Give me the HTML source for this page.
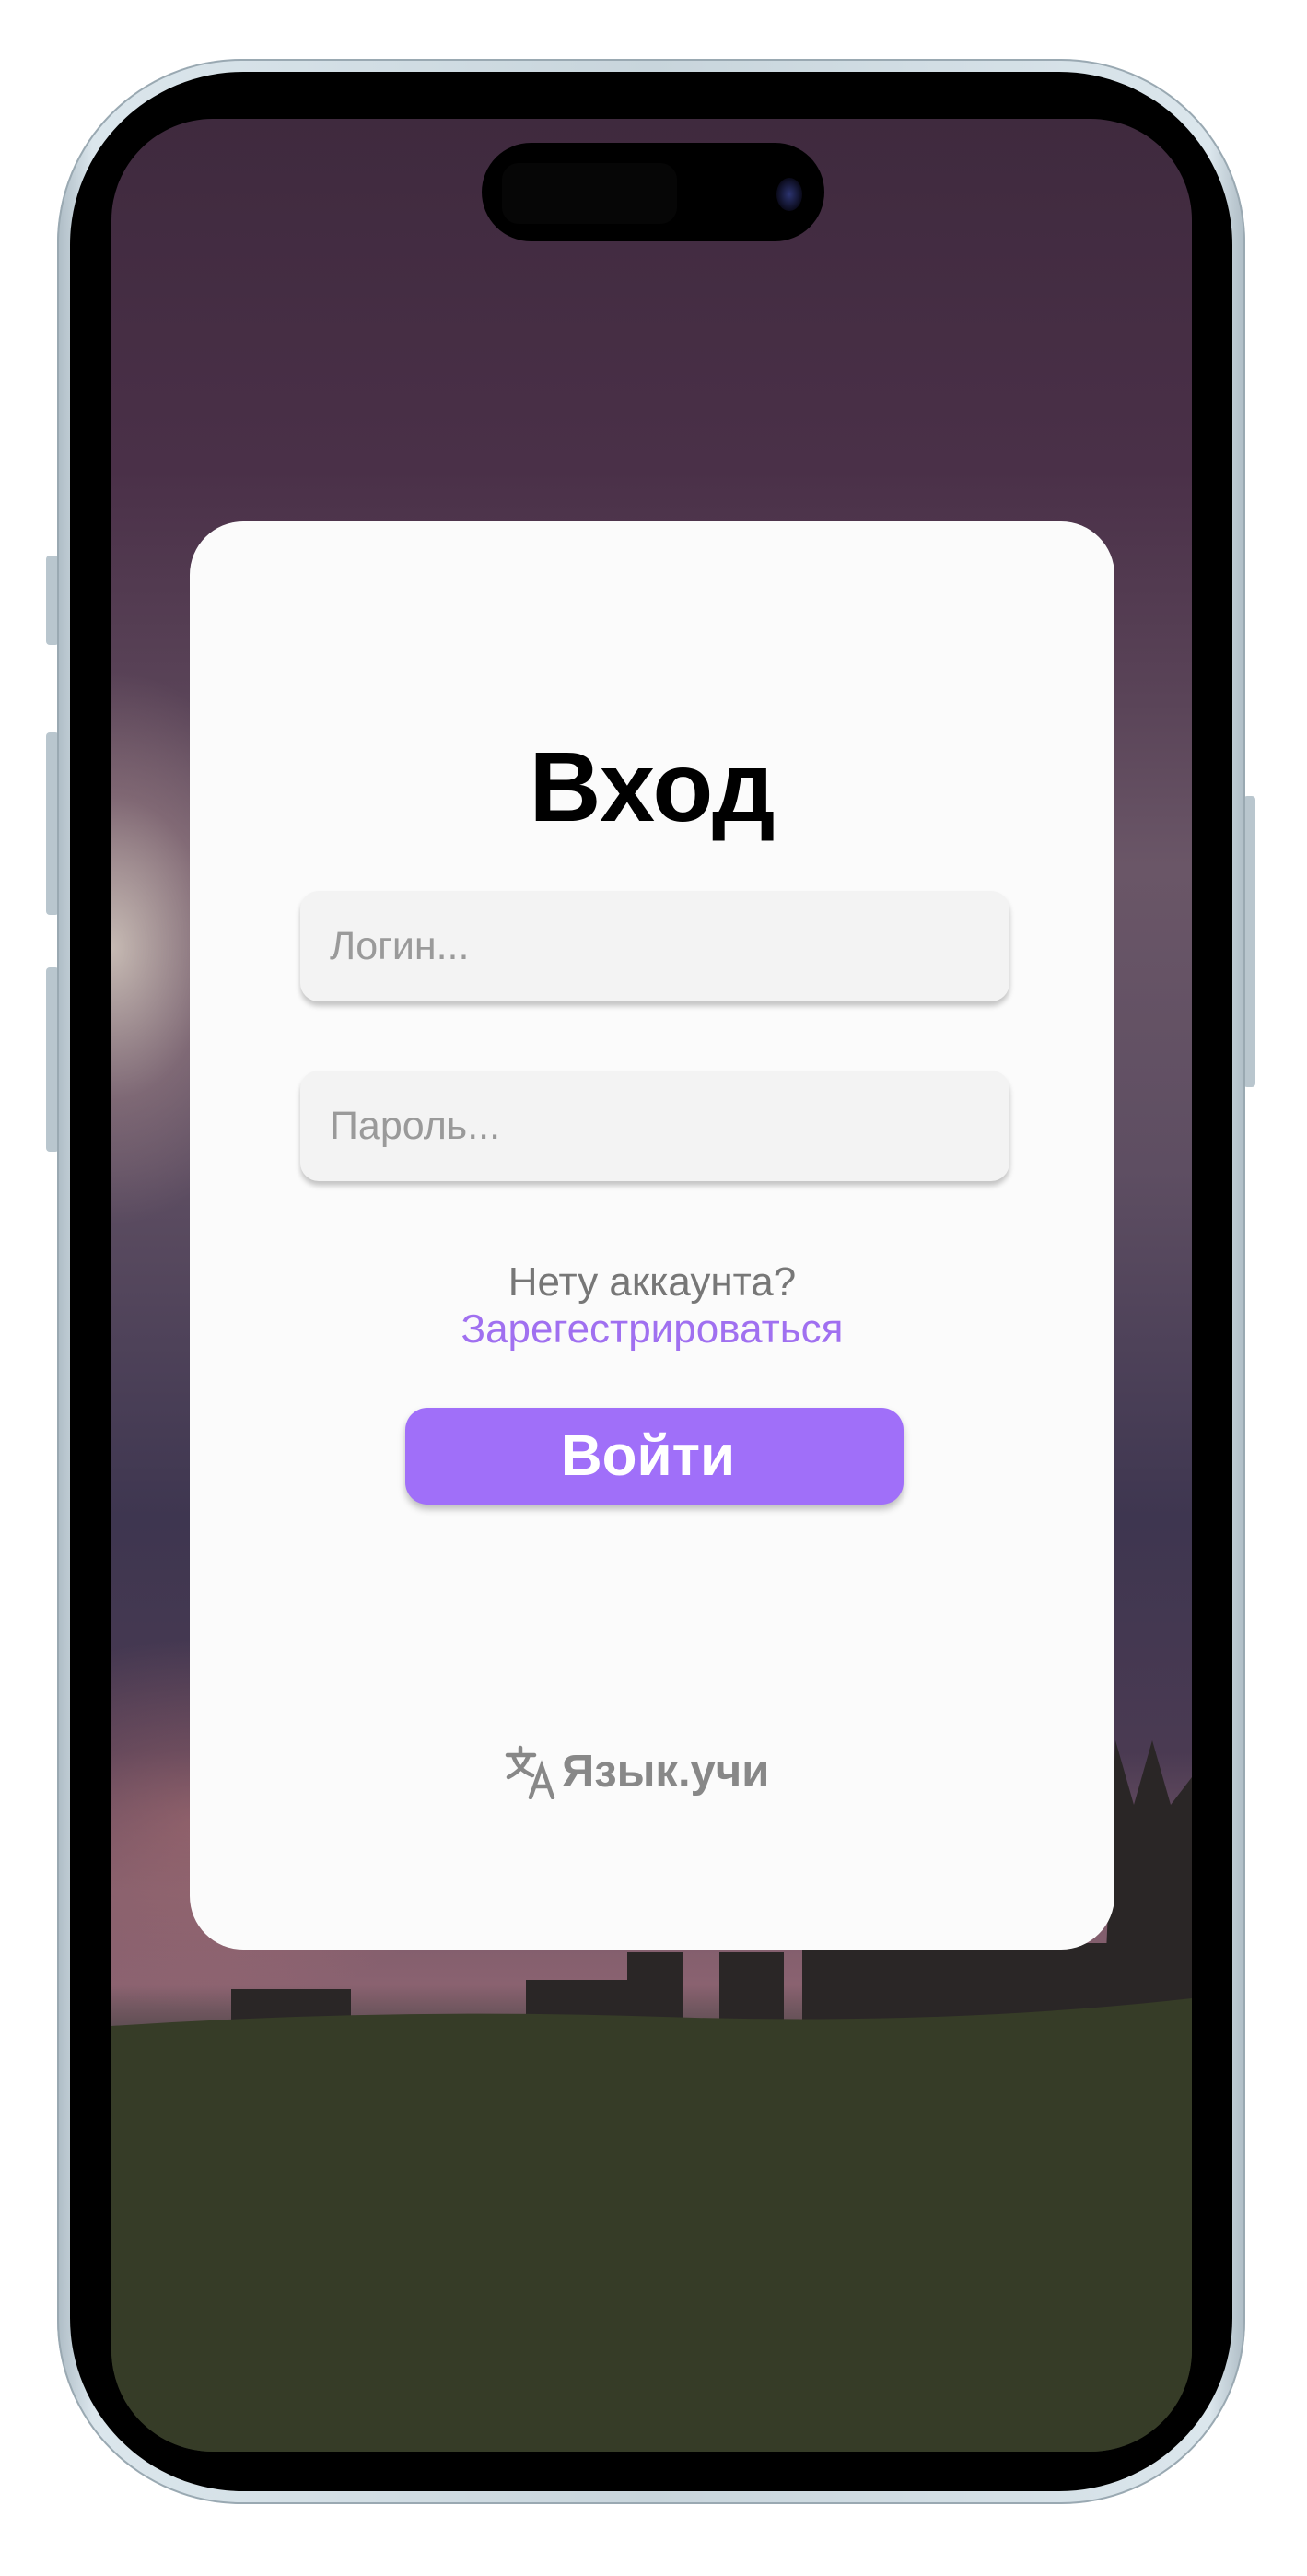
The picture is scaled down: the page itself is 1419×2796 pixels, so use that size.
<!DOCTYPE html>
<html><head><meta charset="utf-8"><style>
html,body{margin:0;padding:0;background:#fff;width:1419px;height:2796px;overflow:hidden;font-family:"Liberation Sans",Arial,sans-serif}
.abs{position:absolute}
.frame{left:62px;top:64px;width:1290px;height:2654px;border-radius:200px;background:linear-gradient(90deg,#aebcc5,#dbe6ec 3%,#c8d5dc 50%,#dbe6ec 97%,#aebcc5);box-shadow:inset 0 0 0 2px #9aa9b2}
.bezel{left:76px;top:78px;width:1262px;height:2626px;border-radius:188px;background:#000}
.screen{left:121px;top:129px;width:1173px;height:2532px;border-radius:110px;overflow:hidden;
background:
radial-gradient(ellipse 200px 300px at 0px 900px,rgba(230,220,205,.75),rgba(180,150,150,.35) 55%,rgba(0,0,0,0) 100%),
radial-gradient(ellipse 300px 200px at 100px 1850px,rgba(190,120,120,.5),rgba(0,0,0,0)),
linear-gradient(180deg,#3f2a3e 0%,#4a3048 15%,#5a4458 25%,#6a5667 32%,#5e4e62 45%,#3e3650 60%,#4a3a52 70%,#7a5a6a 76%,#8a6270 80%,#5a4c50 82%,#3a3a2a 84%,#2e3322 92%,#283020 100%)}
.island{left:523px;top:155px;width:372px;height:107px;border-radius:54px;background:#000}
.card{left:206px;top:566px;width:1004px;height:1550px;border-radius:58px;background:#fbfbfb}
.title{left:206px;width:1004px;top:800px;text-align:center;font-weight:bold;font-size:108px;color:#000;line-height:1}
.inp{left:326px;width:770px;height:120px;border-radius:20px;background:#f3f3f3;box-shadow:0 5px 6px rgba(0,0,0,.22)}
.ph{position:absolute;left:32px;top:0;line-height:120px;font-size:43px;color:#9a9a9a}
.txt{left:206px;width:1004px;text-align:center;font-size:44px;line-height:1}
.btn{left:440px;top:1528px;width:541px;height:105px;border-radius:24px;background:#a06ff9;box-shadow:0 5px 8px rgba(0,0,0,.25);color:#fff;font-weight:bold;font-size:62px;text-align:center;line-height:105px;text-indent:-14px}
.logo{left:548px;top:1893px;color:#888;font-weight:bold;font-size:49px;line-height:60px;white-space:nowrap}
.sb{background:#b9c6ce;border-radius:4px}
</style></head><body>
<div class="abs sb" style="left:50px;top:603px;width:14px;height:97px"></div>
<div class="abs sb" style="left:50px;top:795px;width:14px;height:198px"></div>
<div class="abs sb" style="left:50px;top:1050px;width:14px;height:200px"></div>
<div class="abs sb" style="left:1350px;top:864px;width:13px;height:316px"></div>
<div class="abs frame"></div>
<div class="abs bezel"></div>
<div class="abs screen">
<svg width="1173" height="2532" style="position:absolute;left:0;top:0">
<g fill="#2a2626">
<rect x="560" y="1990" width="60" height="90"/>
<rect x="660" y="1990" width="70" height="90"/>
<rect x="750" y="1980" width="430" height="100"/>
<polygon points="1080,1990 1090,1760 1110,1830 1130,1760 1150,1830 1173,1800 1173,2080 1080,2080"/>
<rect x="450" y="2020" width="120" height="60"/>
<rect x="130" y="2030" width="130" height="50"/>
</g>
<path d="M0 2070 Q300 2050 600 2060 T1173 2040 V2532 H0Z" fill="#363c27"/>
</svg>
</div>
<div class="abs island"><div class="abs" style="left:22px;top:22px;width:190px;height:66px;border-radius:18px;background:#060606"></div><div class="abs" style="left:320px;top:38px;width:28px;height:36px;border-radius:50%;background:radial-gradient(#2c3470,#0a0a1a 70%)"></div></div>
<div class="abs card"></div>
<div class="abs title">Вход</div>
<div class="abs inp" style="top:967px"><span class="ph">Логин...</span></div>
<div class="abs inp" style="top:1162px"><span class="ph">Пароль...</span></div>
<div class="abs txt" style="top:1370px;color:#777">Нету аккаунта?</div>
<div class="abs txt" style="top:1421px;color:#a070f0">Зарегестрироваться</div>
<div class="abs btn">Войти</div>
<div class="abs logo"><svg width="56" height="60" viewBox="0 0 56 60" style="vertical-align:top"><g fill="none" stroke="#888" stroke-width="4.5" stroke-linecap="round"><path d="M3 12H32M17 4V12M9 12Q14 28 30 34M26 12Q20 28 4 36"/><path d="M28 58L40 24L52 58M33 46H47"/></g></svg><span style="margin-left:6px">Язык.учи</span></div>
</body></html>
